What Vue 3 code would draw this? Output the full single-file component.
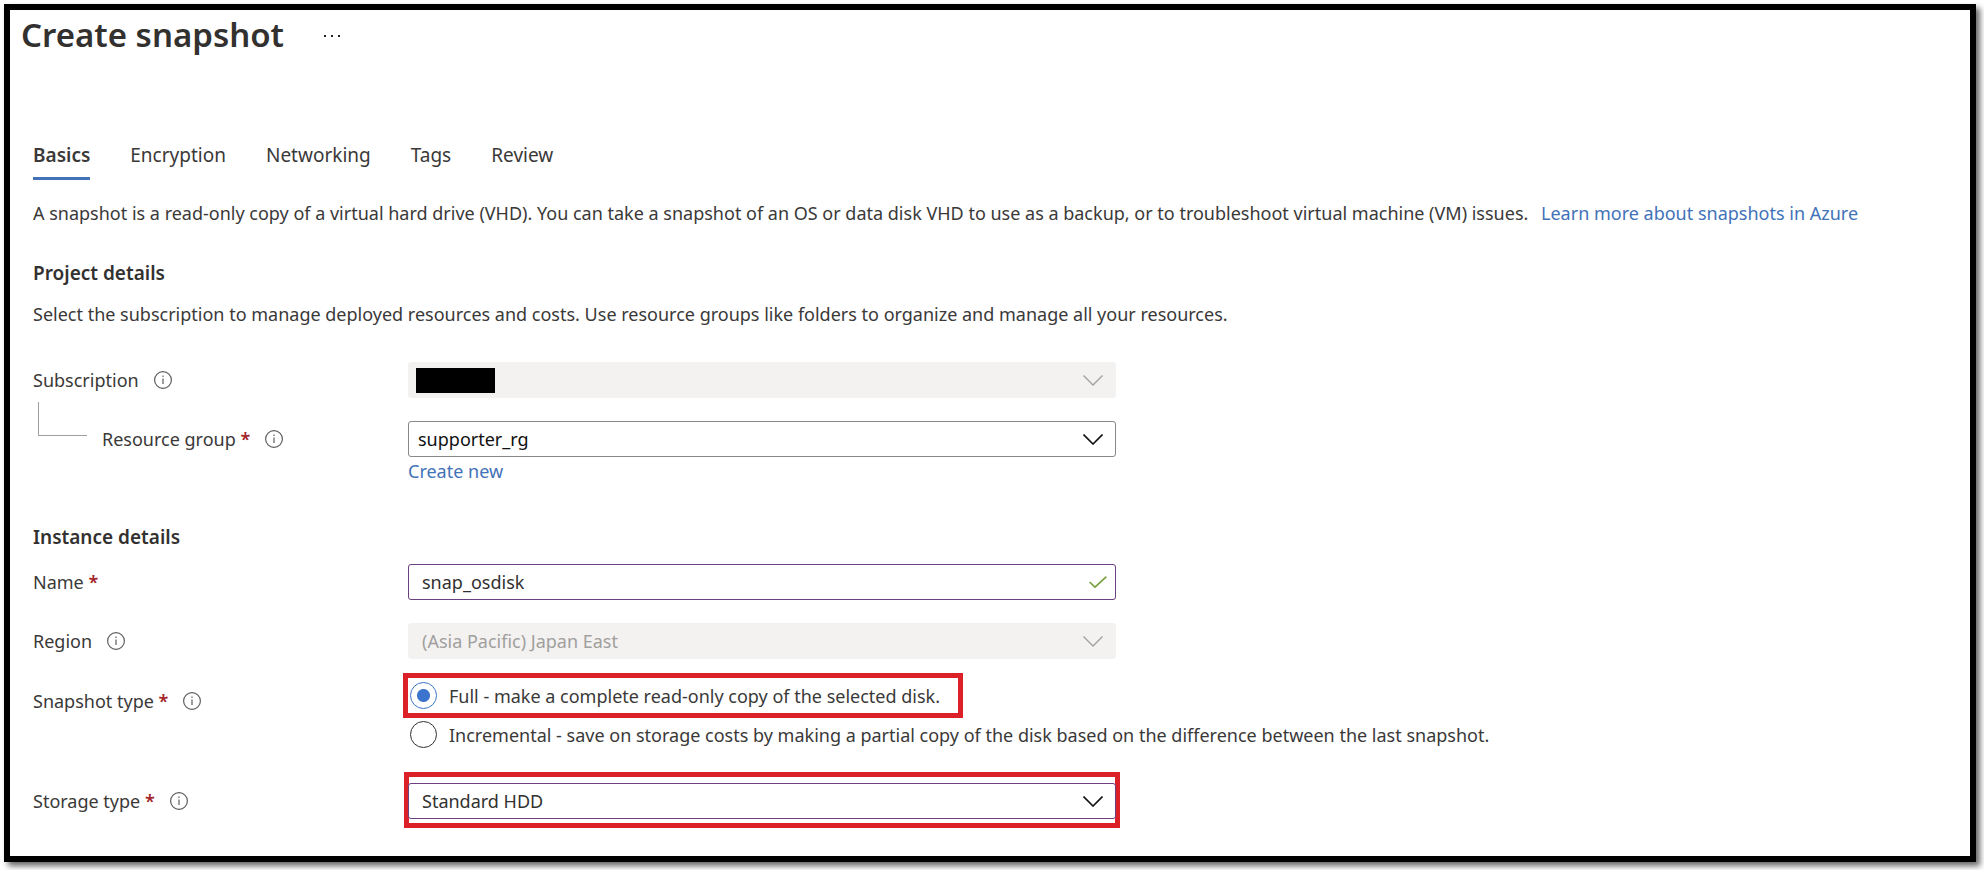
<script setup>
import { ref } from 'vue'

const tabs = ['Basics', 'Encryption', 'Networking', 'Tags', 'Review']
const activeTab = ref('Basics')
const snapshotName = ref('snap_osdisk')
const snapshotType = ref('full')
const typeOptions = [
  { value: 'full', text: 'Full - make a complete read-only copy of the selected disk.' },
  {
    value: 'incremental',
    text: 'Incremental - save on storage costs by making a partial copy of the disk based on the difference between the last snapshot.',
  },
]
</script>

<template>
  <main class="frame">
    <header class="header">
      <h1>Create snapshot</h1>
      <button class="more" type="button" aria-label="More actions">
        <svg width="16" height="4" viewBox="0 0 16 4" aria-hidden="true">
          <path d="M0 1h2v2H0zM7 1h2v2H7zM14 1h2v2h-2z" fill="#222" />
        </svg>
      </button>
    </header>

    <div class="content">
      <nav class="tabs">
        <button
          v-for="tab in tabs"
          :key="tab"
          type="button"
          :class="['tab', { active: tab === activeTab }]"
          @click="activeTab = tab"
        >{{ tab }}</button>
      </nav>

      <p class="intro">
        A snapshot is a read-only copy of a virtual hard drive (VHD). You can take a snapshot of an OS or data disk VHD to use as a backup, or to troubleshoot virtual machine (VM) issues.
        <a class="learn" href="#">Learn more about snapshots in Azure</a>
      </p>

      <h2>Project details</h2>
      <p class="hint">Select the subscription to manage deployed resources and costs. Use resource groups like folders to organize and manage all your resources.</p>

      <div class="row">
        <div class="label">
          <label for="subscription">Subscription</label>
          <svg class="info" viewBox="0 0 18 18" aria-hidden="true"><circle cx="9" cy="9" r="8.4" /><path d="M9 7.5v5.5M9 4.6v1.5" /></svg>
        </div>
        <div class="field disabled">
          <select id="subscription" disabled><option></option></select>
          <span class="redacted"></span>
          <svg class="chevron" viewBox="0 0 20 11" aria-hidden="true"><path d="M.5.5 10 10 19.5.5" /></svg>
        </div>
      </div>

      <div class="row">
        <div class="label">
          <span class="connector"></span>
          <label for="group">Resource group <span class="star">*</span></label>
          <svg class="info" viewBox="0 0 18 18" aria-hidden="true"><circle cx="9" cy="9" r="8.4" /><path d="M9 7.5v5.5M9 4.6v1.5" /></svg>
        </div>
        <div>
          <div class="field group">
            <select id="group"><option>supporter_rg</option></select>
            <svg class="chevron" viewBox="0 0 20 11" aria-hidden="true"><path d="M.5.5 10 10 19.5.5" /></svg>
          </div>
          <a class="create" href="#">Create new</a>
        </div>
      </div>

      <h2 class="instance">Instance details</h2>

      <div class="row">
        <div class="label">
          <label for="name">Name <span class="star">*</span></label>
        </div>
        <div class="field edited">
          <input id="name" v-model="snapshotName" type="text" />
          <svg class="check" viewBox="0 0 18 12" aria-hidden="true"><path d="M.6 6 6 11.2 17.4.6" /></svg>
        </div>
      </div>

      <div class="row">
        <div class="label">
          <label for="region">Region</label>
          <svg class="info" viewBox="0 0 18 18" aria-hidden="true"><circle cx="9" cy="9" r="8.4" /><path d="M9 7.5v5.5M9 4.6v1.5" /></svg>
        </div>
        <div class="field disabled">
          <select id="region" disabled><option>(Asia Pacific) Japan East</option></select>
          <svg class="chevron" viewBox="0 0 20 11" aria-hidden="true"><path d="M.5.5 10 10 19.5.5" /></svg>
        </div>
      </div>

      <div class="row types">
        <div class="label">
          <span id="type-label">Snapshot type <span class="star">*</span></span>
          <svg class="info" viewBox="0 0 18 18" aria-hidden="true"><circle cx="9" cy="9" r="8.4" /><path d="M9 7.5v5.5M9 4.6v1.5" /></svg>
        </div>
        <div class="radios" role="radiogroup" aria-labelledby="type-label">
          <label
            v-for="option in typeOptions"
            :key="option.value"
            :class="['option', { marked: option.value === 'full' }]"
          >
            <input v-model="snapshotType" type="radio" name="snapshot-type" :value="option.value" />
            {{ option.text }}
          </label>
        </div>
      </div>

      <div class="row storage">
        <div class="label">
          <label for="storage">Storage type <span class="star">*</span></label>
          <svg class="info" viewBox="0 0 18 18" aria-hidden="true"><circle cx="9" cy="9" r="8.4" /><path d="M9 7.5v5.5M9 4.6v1.5" /></svg>
        </div>
        <div class="marked-field">
          <div class="field edited">
            <select id="storage"><option>Standard HDD</option></select>
            <svg class="chevron" viewBox="0 0 20 11" aria-hidden="true"><path d="M.5.5 10 10 19.5.5" /></svg>
          </div>
        </div>
      </div>
    </div>
  </main>
</template>

<style>
body {
  background: #fff;
}
</style>

<style scoped>
.frame {
  box-sizing: border-box;
  min-height: calc(100vh - 12px);
  margin: 4px 8px 8px 4px;
  border: 6px solid #000;
  background: #fff;
  box-shadow: 4px 4px 6px rgba(0, 0, 0, 0.6);
  color: #3a3938;
  font-family: "Noto Sans", "Open Sans", sans-serif;
  font-size: 18px;
  line-height: 28px;
}
h1, h2, p {
  margin: 0;
}
.header {
  display: flex;
  align-items: center;
  gap: 40px;
  padding: 2px 11px 0;
}
h1 {
  color: #323130;
  font-size: 33px;
  line-height: 46px;
  font-weight: 600;
}
.more {
  display: flex;
  padding: 2px 0 0;
  border: 0;
  background: none;
}
.content {
  padding: 83px 23px 24px;
}
.tabs {
  display: flex;
  gap: 40px;
}
.tab {
  padding: 0 0 8px;
  border: 0;
  border-bottom: 3px solid transparent;
  background: none;
  color: inherit;
  font: inherit;
  font-size: 19px;
}
.tab.active {
  border-color: #4272b8;
  font-weight: 600;
}
.intro {
  margin-top: 19px;
}
a {
  color: #4272b8;
  text-decoration: none;
}
.learn {
  margin-left: 8px;
}
h2 {
  margin-top: 32px;
  color: #323130;
  font-size: 19px;
  line-height: 28px;
  font-weight: 600;
}
.hint {
  margin: 13px 0 34px;
}
.row {
  display: grid;
  grid-template-columns: 375px minmax(0, 708px);
  margin-bottom: 23px;
}
.label {
  display: flex;
  align-items: center;
  gap: 15px;
  height: 36px;
}
.star {
  color: #a4262c;
  font-weight: 600;
}
.info {
  width: 18px;
  height: 18px;
  fill: none;
  stroke: #605e5c;
  stroke-width: 1.2;
}
.connector {
  box-sizing: border-box;
  width: 49px;
  height: 34px;
  margin: -40px 0 0 5px;
  border: solid #a19f9d;
  border-width: 0 0 1px 1px;
}
.field {
  position: relative;
}
.field select,
.field input {
  display: block;
  box-sizing: border-box;
  width: 100%;
  height: 36px;
  margin: 0;
  padding: 0 40px 0 13px;
  border: 1px solid #8a8886;
  border-radius: 3px;
  outline: 0;
  appearance: none;
  background: #fff;
  color: #323130;
  font: inherit;
}
.field.group select {
  padding-left: 9px;
  color: #111;
}
.field.edited select,
.field.edited input {
  border-color: #6b3f82;
}
.field.disabled select {
  border-color: #f3f2f1;
  background: #f3f2f1;
  color: #a19f9d;
  opacity: 1;
}
.redacted {
  position: absolute;
  top: 6px;
  left: 8px;
  width: 79px;
  height: 25px;
  background: #000;
}
.chevron {
  position: absolute;
  top: 13px;
  right: 13px;
  width: 20px;
  height: 11px;
  fill: none;
  stroke: #111;
  stroke-width: 1.6;
  pointer-events: none;
}
.disabled .chevron {
  stroke: #a19f9d;
  stroke-width: 1.3;
}
.check {
  position: absolute;
  top: 12px;
  right: 9px;
  width: 18px;
  height: 12px;
  fill: none;
  stroke: #76a03a;
  stroke-width: 1.6;
}
.create {
  display: block;
}
.instance {
  margin: 38px 0 13px;
}
.types {
  grid-template-columns: 375px minmax(0, 1fr);
  margin-top: -4px;
  margin-bottom: 24px;
}
.types .label {
  height: 46px;
}
.radios {
  display: flex;
  flex-direction: column;
  align-items: flex-start;
  gap: 4px;
}
.option {
  display: flex;
  align-items: center;
  gap: 12px;
  min-height: 35px;
  padding: 0 18px 0 2px;
}
.option.marked,
.marked-field {
  outline: 5px solid #dc2028;
}
.option input {
  flex: none;
  width: 27px;
  height: 27px;
  margin: 0;
  border: 1px solid #323130;
  border-radius: 50%;
  appearance: none;
  background: #fff;
}
.option input:checked {
  border-color: #3a76c4;
  background: radial-gradient(circle, #3a74cc 6px, #fff 7px);
}
.marked-field {
  padding: 7px 0 5px;
  outline-offset: -1px;
}
.storage {
  align-items: start;
  margin-bottom: 0;
}
.storage .label {
  height: 50px;
}
</style>
